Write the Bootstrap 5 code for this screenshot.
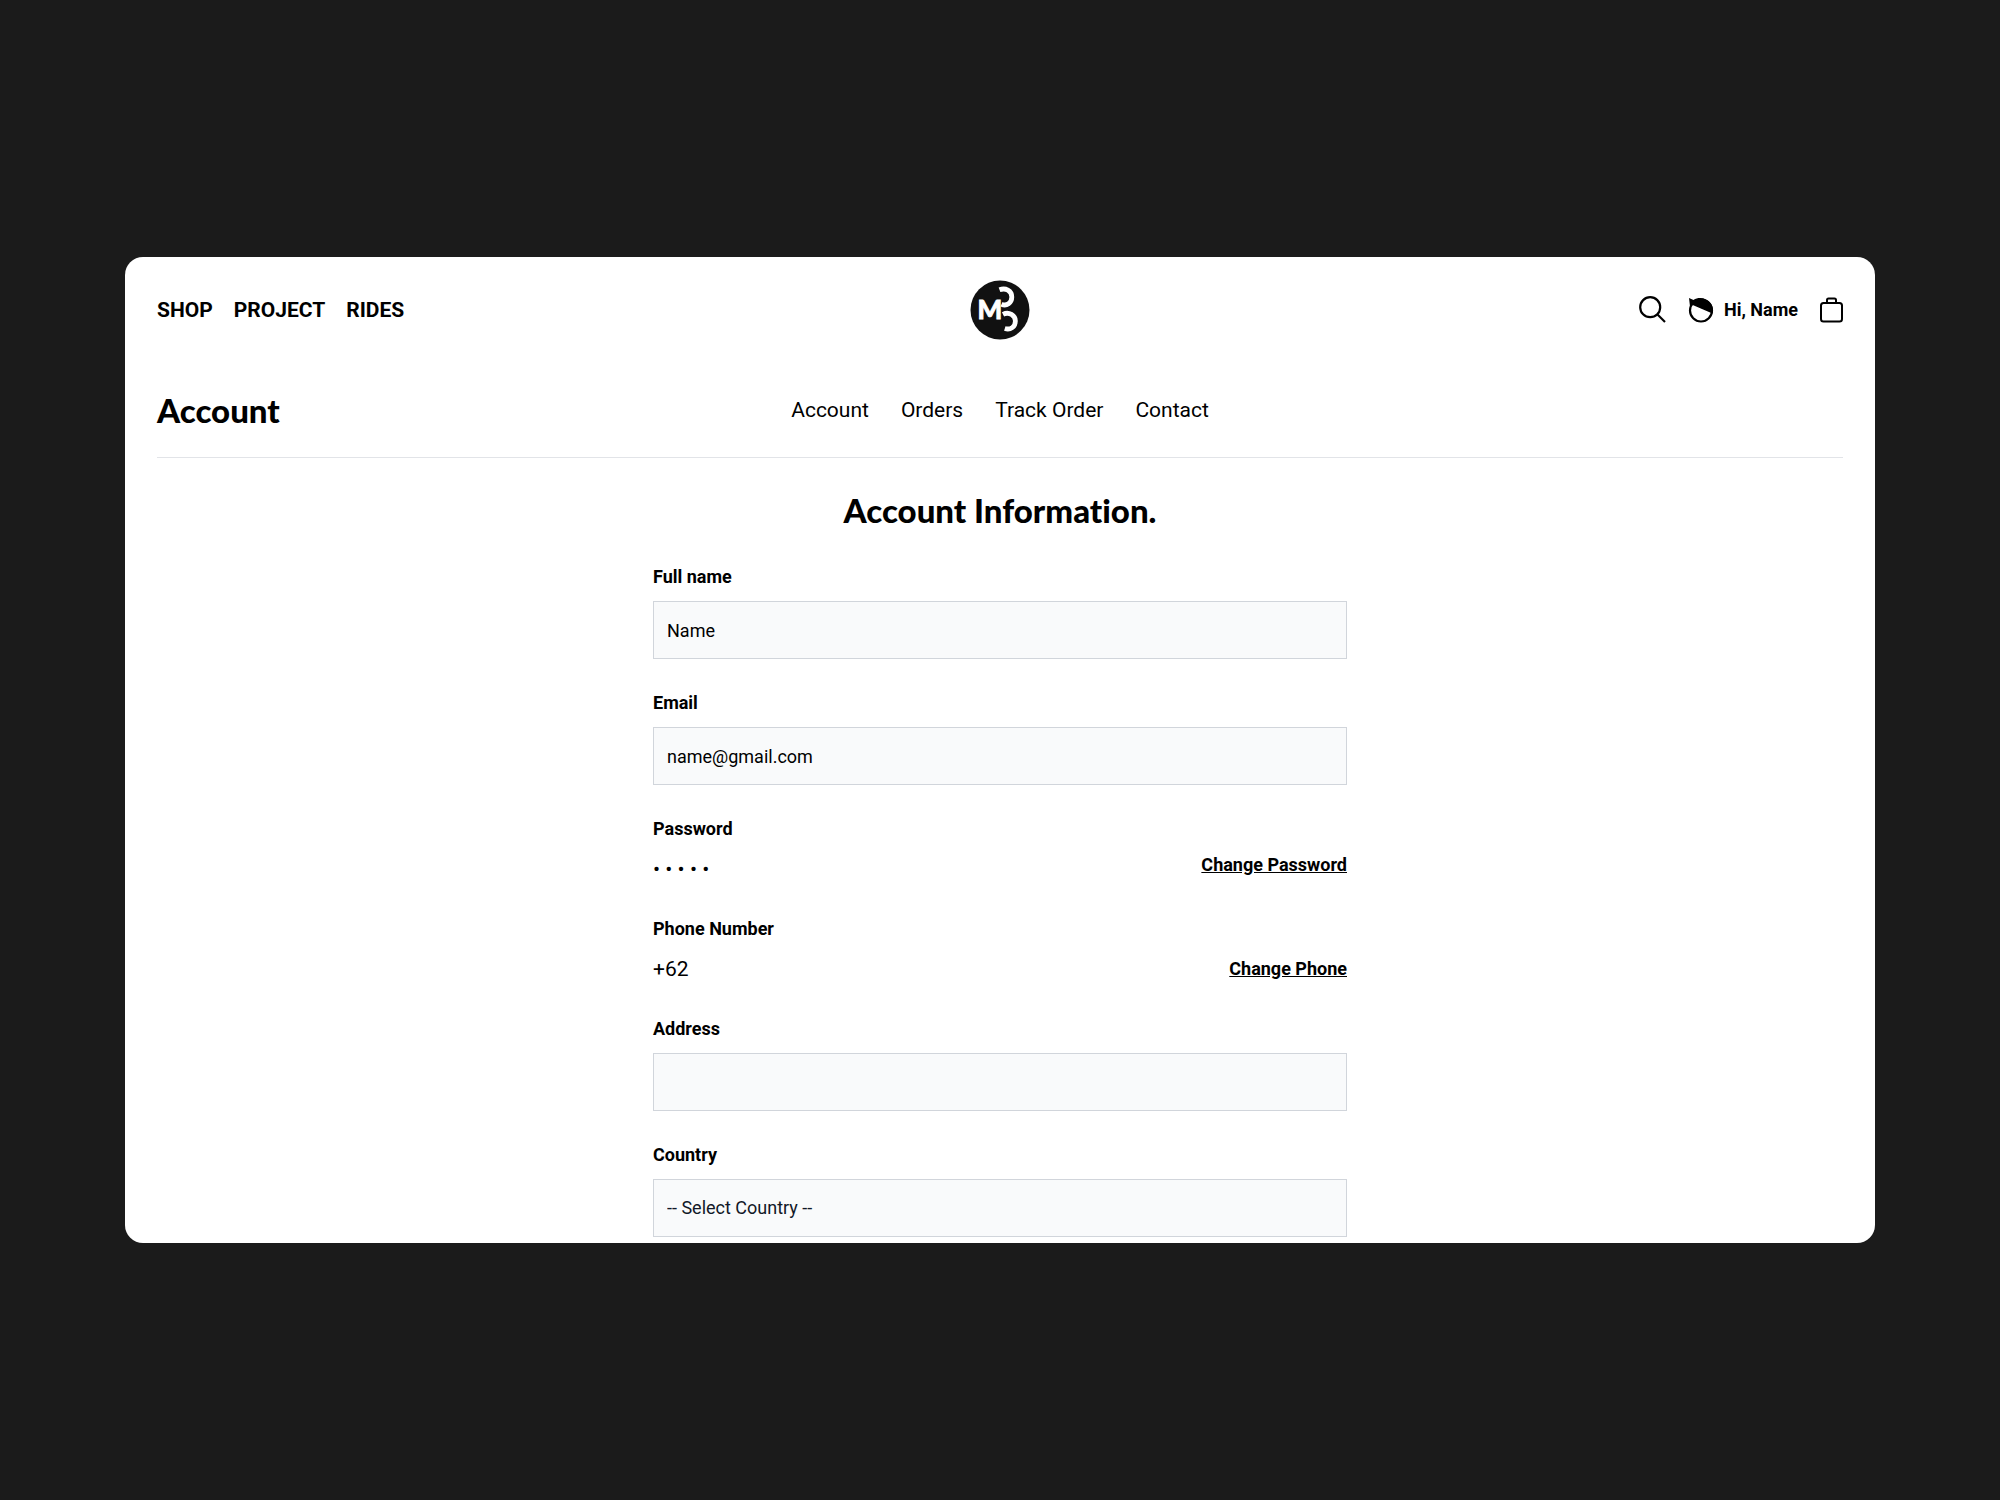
<!DOCTYPE html>
<html lang="en">
<head>
<meta charset="utf-8">
<meta name="viewport" content="width=device-width, initial-scale=1">
<title>Account</title>
<link href="https://cdn.jsdelivr.net/npm/bootstrap@5.3.0/dist/css/bootstrap.min.css" rel="stylesheet">
<style>
body { background: #1b1b1b; color: #000; font-family: Roboto, "Liberation Sans", sans-serif; font-size: 21px; line-height: 32px; }
a, a:hover { color: #000; }
.shop-window { width: 87.5%; aspect-ratio: 1750 / 986; border-radius: 18px; padding: 0 32px; }
.top-bar { height: 105px; }
.sub-bar { height: 96px; border-bottom: 1px solid #e2e4e8; }
.nav-gap { gap: 21px; }
.tool-gap { gap: 22px; }
.tab-gap { gap: 32px; }
.greet-gap { gap: 10px; }
.display-title { font-family: Lato, sans-serif; font-weight: 900; font-size: 33px; line-height: 40px; font-variant-ligatures: none; }
.text-label { font-size: 18px; line-height: 24px; font-weight: 700; }
.account-form { max-width: 694px; padding-top: 32px; }
.account-form .display-title { margin-bottom: 35px; }
.field-group { margin-bottom: 32px; }
.field-group .text-label { display: block; margin-bottom: 12px; }
.field-box, .field-box:focus { height: 58px; padding: 0 13px; border-radius: 0; border: 1px solid #d1d5db; background-color: #f9fafb; background-image: none; color: #000; font-size: 18px; line-height: 24px; }
select.field-box, select.field-box:focus { color: #111827; }
</style>
<script src="https://cdn.jsdelivr.net/npm/bootstrap@5.3.0/dist/js/bootstrap.bundle.min.js"></script>
</head>
<body class="min-vh-100 d-flex align-items-center justify-content-center">
<div class="shop-window bg-white overflow-hidden">
  <header class="top-bar row g-0 align-items-center">
    <nav class="col d-flex nav-gap fw-bold" aria-label="Main">
      <a class="text-decoration-none" href="#">SHOP</a>
      <a class="text-decoration-none" href="#">PROJECT</a>
      <a class="text-decoration-none" href="#">RIDES</a>
    </nav>
    <a class="col-auto d-flex" href="#" aria-label="Home">
      <svg width="60" height="60" viewBox="0 0 60 60">
        <circle cx="30" cy="30" r="29.5" fill="#111"/>
        <text x="7.500" y="39" font-family="Lato, sans-serif" font-weight="900" font-size="26" fill="#fff" stroke="#fff" stroke-width=".8">M</text>
        <g fill="none" stroke="#fff" stroke-width="4.800">
          <path d="M29.500 9.800C35.500 7.500 41.800 10.500 41.800 17C41.800 23 36.500 26.500 31.500 24.200"/>
          <path d="M33 34.300C39 31.300 45.400 35.300 45.400 41C45.400 46.800 40.500 50.300 34.800 48.500"/>
        </g>
      </svg>
    </a>
    <div class="col d-flex justify-content-end align-items-center tool-gap">
      <button class="btn p-0 border-0 d-flex" type="button" aria-label="Search">
        <svg width="27" height="27" viewBox="0 0 27 27" fill="none" stroke="#000" stroke-width="2.200"><circle cx="11.200" cy="11.200" r="10"/><path d="M18 18l8 8"/></svg>
      </button>
      <a class="d-flex align-items-center greet-gap text-label text-decoration-none" href="#">
        <svg width="26" height="26" viewBox="0 0 26 26"><circle cx="13" cy="13.500" r="11" fill="none" stroke="#000" stroke-width="2.200"/><path d="M1 1L5.500 3C11-.5 19 1 22.800 6.500C25 9.500 25.400 13 24.500 16.500L3.500 7.500L2 9.500Z" fill="#000"/></svg>
        Hi, Name
      </a>
      <button class="btn p-0 border-0 d-flex" type="button" aria-label="Bag">
        <svg width="23" height="26" viewBox="0 0 23 26" fill="none" stroke="#000" stroke-width="2"><rect x="1" y="6" width="21" height="18.500" rx="2.500"/><path d="M7 6V3Q7 1.500 8.500 1.500H14.500Q16 1.500 16 3V6"/></svg>
      </button>
    </div>
  </header>

  <div class="sub-bar row g-0 align-items-center">
    <h1 class="col display-title m-0">Account</h1>
    <nav class="col-auto d-flex tab-gap" aria-label="Account">
      <a class="text-decoration-none" href="#">Account</a>
      <a class="text-decoration-none" href="#">Orders</a>
      <a class="text-decoration-none" href="#">Track Order</a>
      <a class="text-decoration-none" href="#">Contact</a>
    </nav>
    <div class="col"></div>
  </div>

  <form class="account-form mx-auto">
    <h2 class="display-title text-center">Account Information.</h2>
    <div class="field-group">
      <label class="text-label" for="fullName">Full name</label>
      <input class="form-control field-box" id="fullName" type="text" value="Name">
    </div>
    <div class="field-group">
      <label class="text-label" for="email">Email</label>
      <input class="form-control field-box" id="email" type="email" value="name@gmail.com">
    </div>
    <div class="field-group">
      <span class="text-label">Password</span>
      <div class="d-flex justify-content-between">
        <span>• • • • •</span>
        <a class="text-label m-0" href="#">Change Password</a>
      </div>
    </div>
    <div class="field-group">
      <span class="text-label">Phone Number</span>
      <div class="d-flex justify-content-between align-items-center">
        <span>+62</span>
        <a class="text-label m-0" href="#">Change Phone</a>
      </div>
    </div>
    <div class="field-group">
      <label class="text-label" for="address">Address</label>
      <input class="form-control field-box" id="address" type="text">
    </div>
    <div class="field-group">
      <label class="text-label" for="country">Country</label>
      <select class="form-select field-box" id="country"><option>-- Select Country --</option></select>
    </div>
  </form>
</div>
</body>
</html>
